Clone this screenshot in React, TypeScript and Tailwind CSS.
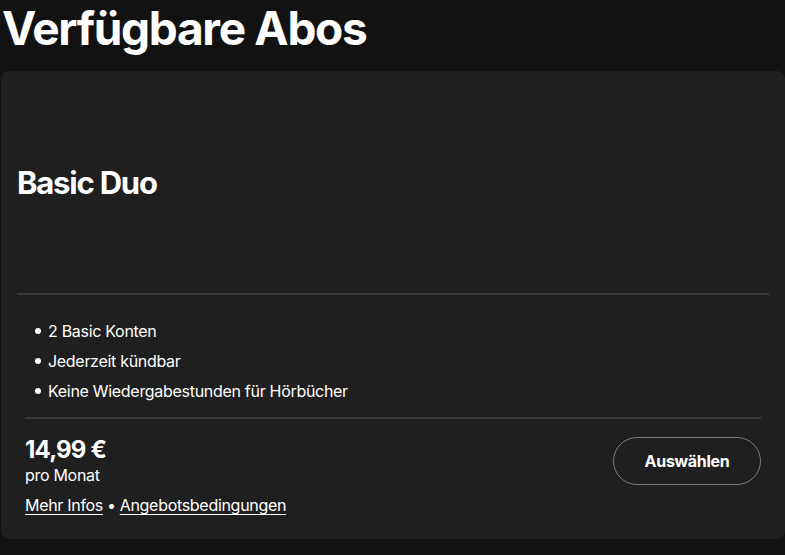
import React from "react";

export default function App() {
  return (
    <div className="w-[785px] h-[555px] overflow-hidden bg-[#121212] text-white" style={{ fontFamily: "Inter, 'Noto Sans', sans-serif" }}>
      <h1 className="px-[2px] pt-[0px] text-[46px] leading-[56px] font-bold tracking-[-1.3px]">Verfügbare Abos</h1>
      <div className="mt-[15px] ml-[1px] h-[468px] rounded-lg bg-[#1f1f1f] flex flex-col">
        <div className="h-[222px] px-4 flex items-center">
          <h2 className="text-[31px] font-bold tracking-[-1.2px] leading-none">Basic Duo</h2>
        </div>
        <div className="mx-4 h-[2px] bg-[#3a3a3a]" />
        <div className="px-6 flex-1 flex flex-col">
          <ul className="pt-[26px] pb-[16px] flex flex-col gap-[10px] text-[16px] leading-[20px] tracking-[-0.3px]">
            <li className="flex items-center gap-[7px] pl-[10px]"><span className="w-[6px] h-[6px] rounded-full bg-white" />2 Basic Konten</li>
            <li className="flex items-center gap-[7px] pl-[10px]"><span className="w-[6px] h-[6px] rounded-full bg-white" />Jederzeit kündbar</li>
            <li className="flex items-center gap-[7px] pl-[10px]"><span className="w-[6px] h-[6px] rounded-full bg-white" />Keine Wiedergabestunden für Hörbücher</li>
          </ul>
          <div className="h-[2px] bg-[#3a3a3a]" />
          <div className="flex items-start justify-between pt-[17px]">
            <div className="flex flex-col">
              <div className="text-[24px] leading-[28px] font-bold tracking-[-0.8px]">14,99 €</div>
              <div className="text-[16px] leading-[22px] tracking-[-0.3px]">pro Monat</div>
              <div className="mt-[9px] text-[16px] leading-[20px] tracking-[-0.3px] flex items-center gap-[4px]">
                <span className="underline underline-offset-[3px]">Mehr Infos</span>
                <span>•</span>
                <span className="underline underline-offset-[3px]">Angebotsbedingungen</span>
              </div>
            </div>
            <button className="mt-[1px] w-[148px] h-[48px] rounded-full border border-[#7c7c7c] text-[16px] font-bold tracking-[-0.3px]">Auswählen</button>
          </div>
        </div>
      </div>
    </div>
  );
}
